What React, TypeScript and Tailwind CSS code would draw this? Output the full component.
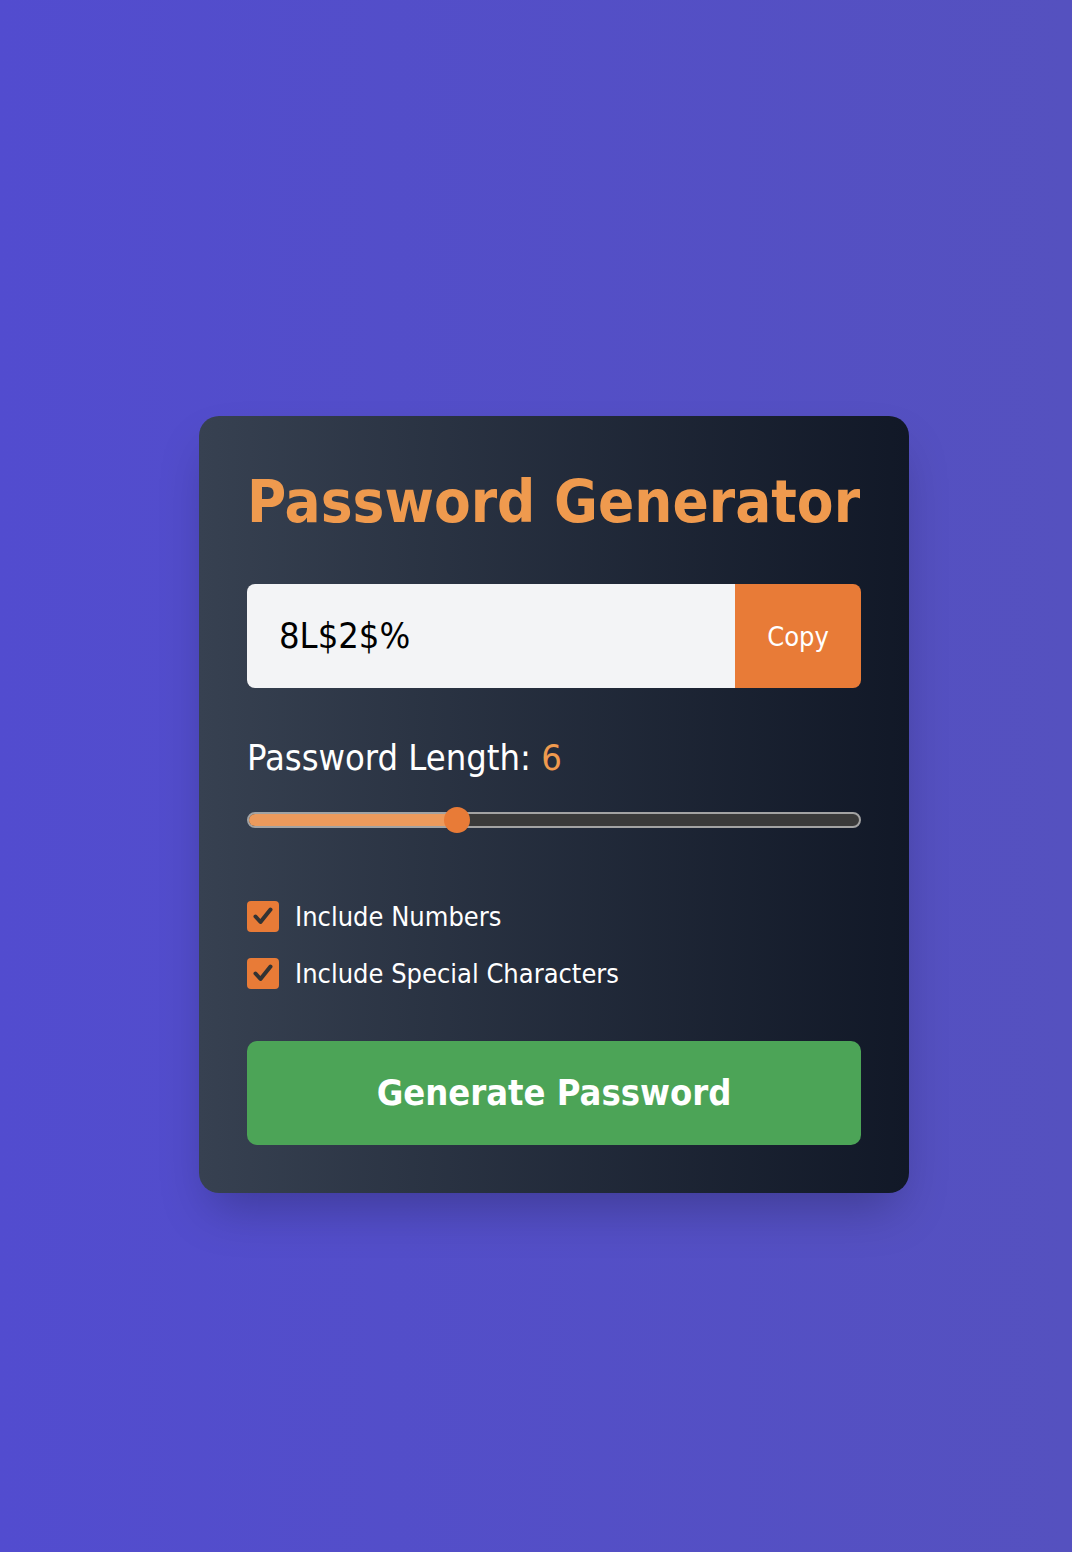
import React, { useState } from 'react';

const FONT = { fontFamily: '"DejaVu Sans", sans-serif' };

function CheckRow({ label, checked, onToggle }: { label: string; checked: boolean; onToggle: () => void }) {
  return (
    <label className="flex items-center gap-4 cursor-pointer" onClick={onToggle}>
      <span className="flex h-[31px] w-[32px] items-center justify-center rounded-[4px] bg-[#e87b37]">
        {checked && (
          <svg width="24" height="24" viewBox="0 0 24 24" fill="none">
            <path d="M4.5 12.5 L9.5 18 L19.5 5.5" stroke="#333" strokeWidth="4" strokeLinecap="round" strokeLinejoin="round" />
          </svg>
        )}
      </span>
      <span className="text-[27px] leading-none text-white">{label}</span>
    </label>
  );
}

export default function App() {
  const [length] = useState(6);
  const [numbers, setNumbers] = useState(true);
  const [special, setSpecial] = useState(true);
  const ratio = (length - 1) / 15;
  const pos = `calc(13px + ${ratio} * (100% - 26px))`;

  return (
    <div
      className="flex min-h-[1552px] w-full items-center justify-center bg-linear-to-r from-[#524ccf] to-[#5551bf] pl-[36px] pt-[56px] font-stretch-condensed"
      style={FONT}
    >
      <div className="w-[710px] rounded-[20px] bg-linear-to-r from-[#374151] to-[#111827] p-12 shadow-2xl">
        <h1 className="mt-[6px] whitespace-nowrap text-[59.5px] font-bold leading-[64px] text-[#ef9a4e]">Password Generator</h1>

        <div className="mt-[50px] flex h-[104px] overflow-hidden rounded-[8px]">
          <div className="flex flex-1 items-center bg-[#f3f4f6] px-8 text-[36px] text-black">8L$2$%</div>
          <button className="w-[126px] bg-[#e87b37] pt-[3px] text-[27px] text-white">Copy</button>
        </div>

        <div className="mt-[50px] text-[36px] leading-[40px] text-white">
          Password Length: <span className="text-[#ef9a4e]">{length}</span>
        </div>

        <div className="relative mt-[34px] h-[16px] rounded-full border-2 border-[#a3a3a3] bg-[#3a3a3a]">
          <div className="h-full rounded-l-full bg-[#ec9a5c]" style={{ width: pos }} />
          <div
            className="absolute top-1/2 h-[26px] w-[26px] -translate-x-1/2 -translate-y-1/2 rounded-full bg-[#e87b37]"
            style={{ left: pos }}
          />
        </div>

        <div className="mt-[73px] flex flex-col gap-[26px]">
          <CheckRow label="Include Numbers" checked={numbers} onToggle={() => setNumbers(!numbers)} />
          <CheckRow label="Include Special Characters" checked={special} onToggle={() => setSpecial(!special)} />
        </div>

        <button className="mt-[52px] flex h-[104px] w-full items-center justify-center rounded-[10px] bg-[#4ca457] text-[36px] font-bold text-white">
          Generate Password
        </button>
      </div>
    </div>
  );
}
